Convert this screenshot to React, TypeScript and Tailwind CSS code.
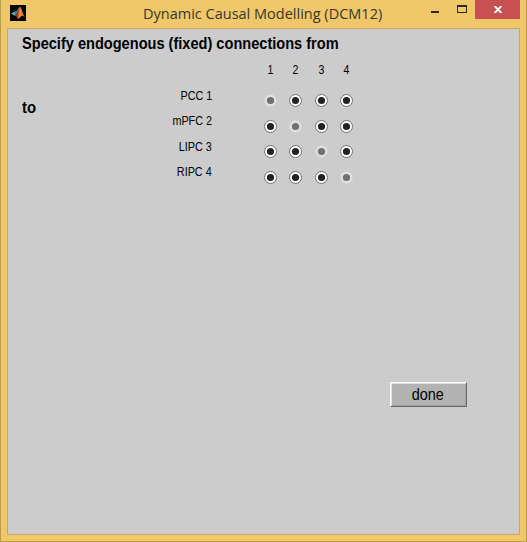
const regions = ['PCC 1', 'mPFC 2', 'LIPC 3', 'RIPC 4'];

function MatlabIcon() {
  return (
    <svg width="16" height="16" viewBox="0 0 16 16" className="block">
      <defs>
        <linearGradient id="flame" x1="0" x2="1" y1="0" y2="0">
          <stop offset="0" stopColor="#7c1c10" />
          <stop offset="0.4" stopColor="#c8501c" />
          <stop offset="0.6" stopColor="#f08a3a" />
          <stop offset="0.8" stopColor="#dc5a20" />
          <stop offset="1" stopColor="#a83214" />
        </linearGradient>
      </defs>
      <rect width="16" height="16" fill="#000" />
      <path d="M.8 8.4 4.6 6.6 6.8 9 4.3 10.8Z" fill="#4fa3bd" />
      <path d="M4.6 6.6 6.2 6C7.6 5.2 8.3 3 9.8 1.6L8.8 6.4 6.8 9Z" fill="#3a7c98" />
      <path d="M4.3 10.8 6.8 9C8.4 7 8.8 3.2 10 1.6 11.4 2.8 12.6 8.6 15.2 12.4 13.4 11.2 12 10.6 10.8 11.6 9.7 12.5 8.9 13.8 7.6 14 7.2 12 6 10.8 4.3 10.8Z" fill="url(#flame)" />
      <path d="M10 2.2C10.2 5 9.6 9.4 8 13.4 9 12.8 9.8 11.7 10.6 11.2 11 7 10.6 4.2 10 2.2Z" fill="#f49a3c" />
    </svg>
  );
}

function Radio({ disabled }: { disabled: boolean }) {
  return (
    <svg width="13" height="13" viewBox="0 0 13 13" className="block">
      <circle cx="6.5" cy="6.5" r="6" fill={disabled ? '#e2e2e2' : '#fff'} stroke={disabled ? '#d4d4d4' : '#707070'} strokeWidth="1" />
      <circle cx="6.5" cy="6.5" r="3.6" fill={disabled ? '#707070' : '#222'} />
    </svg>
  );
}

export default function App() {
  return (
    <div className="flex h-[542px] w-[527px] flex-col border-x border-b border-[#b89d50] bg-[#f0c869] px-1.5 pb-1.5 font-['Liberation_Sans',Arial,sans-serif] text-black">
      <header className="flex h-7 shrink-0 items-start">
        <div className="ml-[3px] mt-[5px]">
          <MatlabIcon />
        </div>
        <h1 className="ml-[117px] mt-[2px] w-[242px] origin-left scale-x-[0.967] whitespace-nowrap font-['Open_Sans',sans-serif] text-[15px] leading-[22px] text-[#39352b]">
          Dynamic Causal Modelling (DCM12)
        </h1>
        <div className="ml-[46px] mt-[11px] h-0.5 w-2 bg-[#2a2927]" />
        <div className="ml-[18px] mt-[5px] h-2 w-2.5 border border-t-2 border-[#2a2927]" />
        <button className="ml-2 flex h-[19px] w-[45px] items-center justify-center bg-[#c75050]">
          <svg width="8" height="7" viewBox="0 0 8 7" className="block" fill="none" stroke="#fff" strokeWidth="1.9">
            <path d="M.6 0 7.4 7M7.4 0 .6 7" />
          </svg>
        </button>
      </header>
      <main className="flex h-[507px] flex-col border border-[#c8a862] bg-[#ccc] pl-3.5">
        <h2 className="mt-1.5 h-[18px] w-fit origin-left scale-x-[0.911] whitespace-nowrap text-[16px] font-bold leading-[18px]">
          Specify endogenous (fixed) connections from
        </h2>
        <div className="flex">
          <div className="mt-[46px] w-[50px] origin-left scale-x-[0.93] text-[16px] font-bold leading-[18px]">to</div>
          <div className="mt-[36px] grid w-[140px] grid-rows-[25px_26px_25px_14px] justify-items-end text-[12px] leading-[14px]">
            {regions.map((name) => (
              <div key={name} className="origin-right scale-x-[0.9] whitespace-nowrap">{name}</div>
            ))}
          </div>
          <div className="ml-[52px] mt-[10px]">
            <div className="grid grid-cols-[25px_26px_25px_13px] text-[12px] leading-[14px]">
              {[1, 2, 3, 4].map((n) => (
                <div key={n} className="w-[13px] scale-x-[0.88] text-center">{n}</div>
              ))}
            </div>
            <div className="mt-[17px] grid grid-cols-[25px_26px_25px_13px] grid-rows-[26px_25px_26px_13px]">
              {regions.map((row) => regions.map((col) => <Radio key={row + col} disabled={row === col} />))}
            </div>
          </div>
        </div>
        <button className="ml-[368px] mt-[198px] h-[25px] w-[77px] border border-b-[#696969] border-l-white border-r-[#696969] border-t-white bg-[#b3b3b3]">
          <span className="block h-full border border-b-[#a0a0a0] border-l-[#e3e3e3] border-r-[#a0a0a0] border-t-[#e3e3e3] pr-0.5 text-[16px] leading-[21px]">
            <span className="inline-block scale-x-[0.9]">done</span>
          </span>
        </button>
      </main>
    </div>
  );
}
